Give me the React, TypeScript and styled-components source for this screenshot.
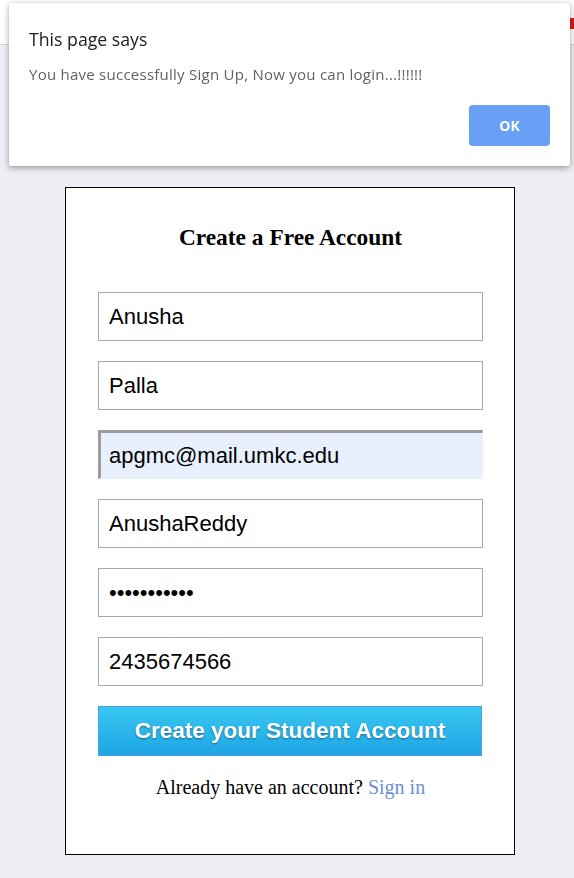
import React from "react";
import styled, { createGlobalStyle } from "styled-components";

const GlobalStyle = createGlobalStyle`
  html, body {
    margin: 0;
    padding: 0;
  }
  body {
    background: #eceef3;
    min-height: 878px;
  }
  * { box-sizing: border-box; }
`;

const BrowserBar = styled.div`
  height: 45px;
  background: #ffffff;
  border-bottom: 1px solid #d3d4d8;
  display: flex;
  justify-content: flex-end;
  align-items: flex-start;
`;

const RedTab = styled.div`
  width: 4px;
  height: 11px;
  margin-top: 18px;
  background: #e0191b;
`;

const Page = styled.main`
  padding: 142px 0 24px 65px;
`;

const Card = styled.form`
  width: 450px;
  background: #ffffff;
  border: 1px solid #000000;
  padding: 35px 31px 55px 32px;
  display: flex;
  flex-direction: column;
`;

const Title = styled.h2`
  margin: 0 0 41px;
  font-family: "Liberation Serif", "Times New Roman", serif;
  font-size: 23.4px;
  line-height: 28px;
  font-weight: bold;
  text-align: center;
  color: #000;
`;

const Fields = styled.div`
  display: flex;
  flex-direction: column;
  gap: 20px;
`;

const Field = styled.input<{ $autofilled?: boolean }>`
  width: 385px;
  height: 49px;
  margin: 0;
  padding: 0 10px;
  font-family: "Liberation Sans", Arial, sans-serif;
  font-size: 22px;
  color: #000;
  outline: none;
  background: ${(p) => (p.$autofilled ? "#e8f0fe" : "#ffffff")};
  border: 1px solid #a9a9a9;
  ${(p) =>
    p.$autofilled &&
    `
    border: 1px solid #e8f0fe;
    border-top: 3px solid #9c9c9c;
    border-left: 3px solid #9c9c9c;
    padding-left: 8px;
  `}
`;

const SubmitButton = styled.button`
  margin-top: 20px;
  width: 384px;
  height: 50px;
  border: 1px solid #4a9fe3;
  background: linear-gradient(to bottom, #39c8f2 0%, #1da5e5 100%);
  color: #ffffff;
  font-family: "Liberation Sans", Arial, sans-serif;
  font-weight: bold;
  font-size: 22.5px;
  text-shadow: 0 1px 2px rgba(0, 0, 0, 0.4);
  cursor: pointer;
  padding: 0;
`;

const SignInLine = styled.p`
  margin: 20px 0 0;
  text-align: center;
  font-family: "Liberation Serif", "Times New Roman", serif;
  font-size: 20px;
  line-height: 23px;
  color: #000;
`;

const SignInLink = styled.a`
  color: #6b8fd6;
  text-decoration: none;
`;

const Dialog = styled.div`
  position: fixed;
  top: 3px;
  left: 9px;
  width: 561px;
  height: 163px;
  background: #ffffff;
  border-radius: 2px;
  box-shadow: 0 2px 6px rgba(0, 0, 0, 0.35), 0 0 1px rgba(0, 0, 0, 0.25);
  padding: 24px 20px 20px 20px;
  display: flex;
  flex-direction: column;
  font-family: "Open Sans", "Noto Sans", sans-serif;
`;

const DialogTitle = styled.div`
  font-size: 17.7px;
  line-height: 24px;
  color: #202124;
`;

const DialogMessage = styled.div`
  margin-top: 13px;
  font-size: 15px;
  letter-spacing: 0.25px;
  line-height: 21px;
  color: #5f6368;
`;

const DialogActions = styled.div`
  margin-top: auto;
  display: flex;
  justify-content: flex-end;
`;

const OkButton = styled.button`
  width: 81px;
  height: 41px;
  border: none;
  border-radius: 4px;
  background: #6a9ff6;
  color: #ffffff;
  font-family: "Open Sans", "Noto Sans", sans-serif;
  font-weight: bold;
  font-size: 14px;
  padding: 0;
`;

export default function App() {
  return (
    <>
      <GlobalStyle />
      <BrowserBar>
        <RedTab />
      </BrowserBar>
      <Page>
        <Card onSubmit={(e) => e.preventDefault()}>
          <Title>Create a Free Account</Title>
          <Fields>
            <Field type="text" defaultValue="Anusha" readOnly />
            <Field type="text" defaultValue="Palla" readOnly />
            <Field type="email" defaultValue="apgmc@mail.umkc.edu" readOnly $autofilled />
            <Field type="text" defaultValue="AnushaReddy" readOnly />
            <Field type="password" defaultValue="anusha12345" readOnly />
            <Field type="tel" defaultValue="2435674566" readOnly />
          </Fields>
          <SubmitButton type="submit">Create your Student Account</SubmitButton>
          <SignInLine>
            Already have an account? <SignInLink href="#">Sign in</SignInLink>
          </SignInLine>
        </Card>
      </Page>
      <Dialog role="alertdialog">
        <DialogTitle>This page says</DialogTitle>
        <DialogMessage>You have successfully Sign Up, Now you can login...!!!!!!</DialogMessage>
        <DialogActions>
          <OkButton type="button">OK</OkButton>
        </DialogActions>
      </Dialog>
    </>
  );
}
